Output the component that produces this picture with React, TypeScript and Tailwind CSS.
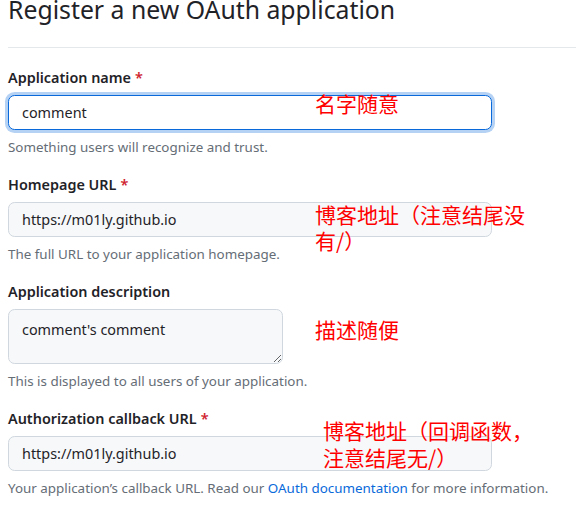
import React from "react";

const sans = "font-['Segoe_UI','Noto_Sans','Liberation_Sans',sans-serif]";

interface FieldProps {
  label: string;
  required?: boolean;
  value: string;
  help: React.ReactNode;
  focused?: boolean;
  textarea?: boolean;
}

const Field = (props: FieldProps) => {
  return (
    <div className="mb-[18px]">
      <label className="block h-[21px] text-[14.4px] leading-[21px] font-semibold text-[#1f2328]">
        {props.label}
        {props.required && <span className="ml-[4px] text-[#cf222e]">*</span>}
      </label>
      <div className="mt-[7px]">
        {props.textarea ? (
          <textarea
            readOnly
            value={props.value}
            className="block w-[275px] h-[55px] rounded-[6.6px] border border-[#d0d7de] bg-[#f6f8fa] px-[13px] pt-[9px] pb-[4px] text-[14.4px] leading-[22px] text-[#1f2328] outline-none"
          />
        ) : (
          <input
            readOnly
            value={props.value}
            className={
              props.focused
                ? "block w-[484px] h-[35px] rounded-[6.6px] border border-[#0969da] bg-white px-[13px] text-[14.4px] text-[#1f2328] outline-none shadow-[0_0_0_3px_rgba(9,105,218,0.3)]"
                : "block w-[484px] h-[35px] rounded-[6.6px] border border-[#d0d7de] bg-[#f6f8fa] px-[13px] text-[14.4px] text-[#1f2328] outline-none"
            }
          />
        )}
      </div>
      <p className="mt-[8px] text-[13.4px] leading-[18px] text-[#656d76]">{props.help}</p>
    </div>
  );
};

export default function App() {
  return (
    <div className={`relative w-[576px] h-[510px] overflow-hidden bg-white ${sans}`}>
      <div className="pl-[8px]">
        <div className="-mt-[7px] pb-[21px] border-b border-[#e5e8eb]">
          <h2 className="text-[24.8px] leading-[33px] font-normal text-[#1f2328]">
            Register a new OAuth application
          </h2>
        </div>
        <div className="pt-[19px]">
          <Field
            label="Application name"
            required
            value="comment"
            focused
            help="Something users will recognize and trust."
          />
          <Field
            label="Homepage URL"
            required
            value="https://m01ly.github.io"
            help="The full URL to your application homepage."
          />
          <Field
            label="Application description"
            textarea
            value="comment's comment"
            help="This is displayed to all users of your application."
          />
          <Field
            label="Authorization callback URL"
            required
            value="https://m01ly.github.io"
            help={
              <>
                Your application’s callback URL. Read our{" "}
                <a className="text-[#0969da]">OAuth documentation</a> for more information.
              </>
            }
          />
        </div>
      </div>

      {/* red notes pasted over the screenshot */}
      <div className="absolute inset-0 text-[21px] text-[#ff0000] font-['Microsoft_YaHei','Noto_Sans_CJK_SC',sans-serif] pointer-events-none">
        <div className="absolute left-[315px] top-[90px] leading-[26px]">名字随意</div>
        <div className="absolute left-[315px] top-[201px] leading-[26px]">
          博客地址（注意结尾没
          <br />
          有/）
        </div>
        <div className="absolute left-[315px] top-[316px] leading-[26px]">描述随便</div>
        <div className="absolute left-[323px] top-[417px] leading-[27px]">
          博客地址（回调函数，
          <br />
          注意结尾无/）
        </div>
      </div>
    </div>
  );
}
